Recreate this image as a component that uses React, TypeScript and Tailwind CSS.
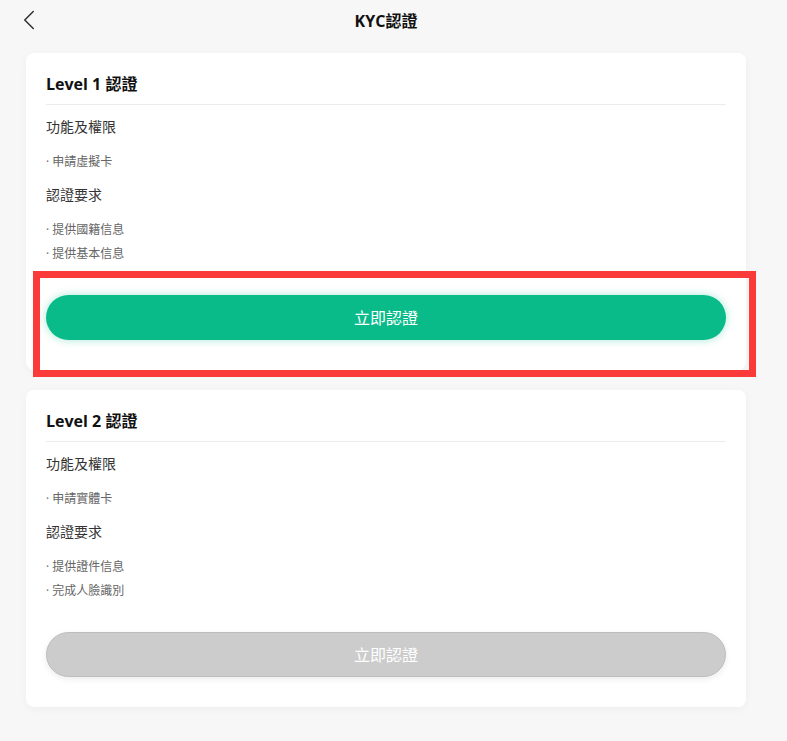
import { ChevronLeft } from "lucide-react";

const levels = [
  {
    title: "Level 1 認證",
    perms: ["申請虛擬卡"],
    reqs: ["提供國籍信息", "提供基本信息"],
    active: true,
  },
  {
    title: "Level 2 認證",
    perms: ["申請實體卡"],
    reqs: ["提供證件信息", "完成人臉識別"],
    active: false,
  },
];

const font = { fontFamily: '"Open Sans", "Noto Sans CJK TC", sans-serif' };

const Item = ({ text }: { text: string }) => (
  <p className="text-[12px] leading-[18px] text-[#666]">· {text}</p>
);

export default function App() {
  return (
    <div className="relative min-h-[741px] bg-[#f7f7f7] pb-8" style={font}>
      {/* header */}
      <div className="relative flex h-[42px] items-center justify-center pr-[15px]">
        <button className="absolute left-[12px] top-[3px] text-[#333]">
          <ChevronLeft size={34} strokeWidth={1.1} />
        </button>
        <h1 className="text-[16px] font-bold text-[#111]">KYC認證</h1>
      </div>

      <div className="mt-[11px] flex flex-col gap-5 px-[26px] pr-[41px]">
        {levels.map((lv) => (
          <div key={lv.title} className="rounded-lg bg-white px-5 pb-[30px] shadow-[0_2px_8px_rgba(0,0,0,0.04)]">
            <div className="border-b border-[#ececec] pb-[9px] pt-5">
              <h2 className="text-[16px] font-bold leading-[22px] text-[#111]">{lv.title}</h2>
            </div>
            <p className="mt-3 text-[14px] leading-[20px] text-[#333]">功能及權限</p>
            <div className="mt-[16px] flex flex-col gap-[6px]">
              {lv.perms.map((p) => (
                <Item key={p} text={p} />
              ))}
            </div>
            <p className="mt-[14px] text-[14px] leading-[20px] text-[#333]">認證要求</p>
            <div className="mt-[16px] flex flex-col gap-[6px]">
              {lv.reqs.map((p) => (
                <Item key={p} text={p} />
              ))}
            </div>
            <button
              className={`mt-[32px] flex h-[45px] w-full items-center justify-center rounded-full text-[16px] text-white ${
                lv.active
                  ? "bg-[#0abb8a] shadow-[0_0_8px_rgba(10,187,138,0.35)]"
                  : "border border-[#bdbdbd] bg-[#cccccc] shadow-[0_2px_6px_rgba(0,0,0,0.08)]"
              }`}
            >
              立即認證
            </button>
          </div>
        ))}
      </div>

      {/* annotation box */}
      <div className="pointer-events-none absolute left-[33px] top-[271px] h-[106px] w-[723px] border-[7px] border-[#fb3a3a]" />
    </div>
  );
}
